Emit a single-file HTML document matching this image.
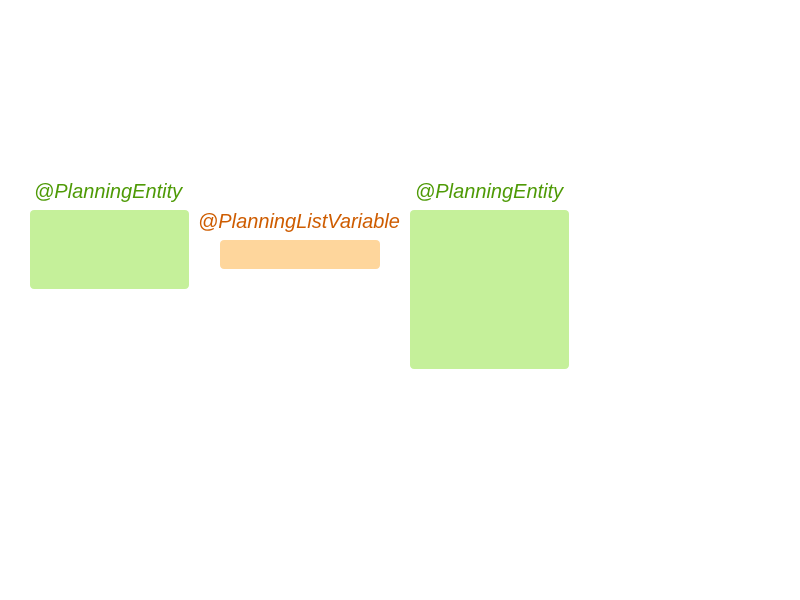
<!DOCTYPE html>
<html><head><style>
body{margin:0;width:800px;height:600px;background:#fff;position:relative;overflow:hidden;font-family:"Liberation Sans",sans-serif}
.t{position:absolute;font-style:italic;font-size:20px;line-height:20px;white-space:nowrap}
.b{position:absolute;border-radius:4px}
</style></head><body>
<div class="t" style="left:34px;top:182px;color:#4e9a06">@PlanningEntity</div>
<div class="b" style="left:30px;top:210px;width:159px;height:79px;background:#c5f09a"></div>
<div class="t" style="left:198px;top:212px;color:#ce5c00">@PlanningListVariable</div>
<div class="b" style="left:220px;top:240px;width:160px;height:29px;background:#fed69c"></div>
<div class="t" style="left:415px;top:182px;color:#4e9a06">@PlanningEntity</div>
<div class="b" style="left:410px;top:210px;width:159px;height:159px;background:#c5f09a"></div>
</body></html>
